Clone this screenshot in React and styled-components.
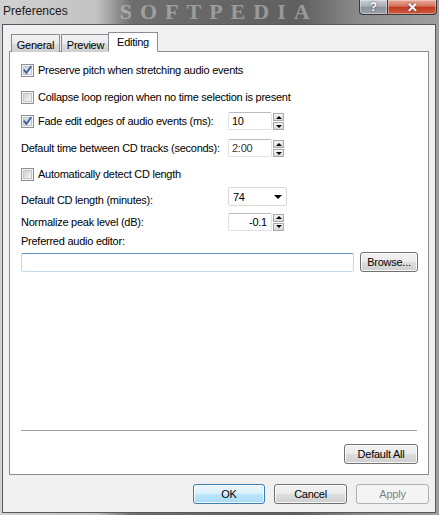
import React from "react";
import styled, { createGlobalStyle } from "styled-components";

const GlobalStyle = createGlobalStyle`
  html, body {
    margin: 0;
    padding: 0;
  }
  body {
    width: 439px;
    height: 515px;
    overflow: hidden;
    background: #c4c8cc;
    font-family: "Liberation Sans", Arial, sans-serif;
    font-size: 11px;
    letter-spacing: -0.25px;
    color: #000;
  }
`;

const Window = styled.div`
  width: 439px;
  height: 515px;
  display: flex;
  flex-direction: column;
  background: linear-gradient(
    90deg,
    #d2d2d2 0%,
    #c2c2c2 22%,
    #6e6e6e 30%,
    #5f5f5f 68%,
    #8c8c8c 82%,
    #9e9e9e 100%
  );
`;

const TitleBar = styled.div`
  height: 24px;
  display: flex;
  align-items: flex-start;
`;

const Title = styled.div`
  margin: 4px 0 0 3px;
  font-size: 12px;
  letter-spacing: 0;
  color: #1c1c1c;
  white-space: nowrap;
`;

const Watermark = styled.div`
  margin: 0 0 0 52px;
  font-family: "Liberation Serif", "Times New Roman", serif;
  font-size: 22px;
  font-weight: bold;
  letter-spacing: 8px;
  color: rgba(235, 235, 235, 0.42);
  white-space: nowrap;
  line-height: 24px;
`;

const Captions = styled.div`
  margin-left: auto;
  margin-right: 2px;
  display: flex;
  height: 15px;
`;

const CaptionButton = styled.div`
  width: ${({ w }) => w}px;
  height: 14px;
  border: 1px solid #3a3a3a;
  border-top: none;
  border-radius: ${({ close }) => (close ? "0 0 4px 0" : "0 0 0 4px")};
  border-left-width: ${({ close }) => (close ? 0 : 1)}px;
  background: ${({ close }) =>
    close
      ? "linear-gradient(#e9a897, #d5735d 45%, #c23a1f 50%, #cf5a3f)"
      : "linear-gradient(#c9ced3, #aab0b6 45%, #8d949b 50%, #9ba2a9)"};
  box-shadow: inset 0 0 0 1px rgba(255, 255, 255, 0.35);
  display: flex;
  align-items: center;
  justify-content: center;
  color: #fff;
  font-weight: bold;
  font-size: ${({ close }) => (close ? 13 : 12)}px;
  letter-spacing: 0;
  text-shadow: 0 0 2px #333;
`;

const Client = styled.div`
  flex: 1;
  margin: 0 3px 2px 2px;
  border: 1px solid #555a60;
  background: #f0f0f0;
  padding: 7px 6px 8px 6px;
  display: flex;
  flex-direction: column;
`;

const TabStrip = styled.div`
  display: flex;
  align-items: flex-end;
  height: 20px;
  padding-left: 2px;
  margin-bottom: -1px;
  position: relative;
  z-index: 1;
`;

const Tab = styled.div`
  width: ${({ w }) => w}px;
  height: ${({ active }) => (active ? 20 : 18)}px;
  box-sizing: border-box;
  border: 1px solid #898c95;
  border-bottom: ${({ active }) => (active ? "1px solid #fff" : "none")};
  margin-left: ${({ active }) => (active ? -2 : 1)}px;
  background: ${({ active }) =>
    active ? "#fff" : "linear-gradient(#f2f2f2, #ebebeb 50%, #dddddd 51%, #cfcfcf)"};
  display: flex;
  align-items: center;
  justify-content: center;
  padding-top: ${({ active }) => (active ? 0 : 2)}px;
  &:first-child {
    margin-left: 0;
  }
`;

const Panel = styled.div`
  flex: 1;
  border: 1px solid #898c95;
  background: #fff;
  padding: 0 10px 10px 11px;
  display: flex;
  flex-direction: column;
`;

const Row = styled.div`
  margin-top: ${({ mt }) => mt}px;
  height: ${({ h }) => h}px;
  display: grid;
  grid-template-columns: ${({ plain }) => (plain ? "auto" : "207px auto")};
  align-items: center;
`;

const CheckLine = styled.label`
  display: flex;
  align-items: center;
  gap: 4px;
  white-space: nowrap;
`;

const Label = styled.span`
  white-space: nowrap;
  align-self: ${({ low }) => (low ? "end" : "center")};
`;

const Spin = styled.div`
  display: flex;
  gap: 1px;
  height: 18px;
`;

const TextBox = styled.div`
  box-sizing: border-box;
  width: ${({ w }) => w}px;
  height: ${({ h }) => h || 18}px;
  border: 1px solid #dfe3e8;
  border-top-color: #b7bcc2;
  border-radius: 2px;
  background: #fff;
  padding: 0 ${({ right }) => (right ? 4 : 3)}px;
  display: flex;
  align-items: center;
  justify-content: ${({ right }) => (right ? "flex-end" : "flex-start")};
  color: ${({ dim }) => (dim ? "#333" : "#000")};
`;

const SpinButtons = styled.div`
  width: 11px;
  display: flex;
  flex-direction: column;
  gap: 1px;
  padding-top: 1px;
`;

const SpinButton = styled.div`
  flex: 1;
  box-sizing: border-box;
  border: 1px solid #a9a9a9;
  background: linear-gradient(#f6f6f6, #d8d8d8);
  display: flex;
  align-items: center;
  justify-content: center;
  &::after {
    content: "";
    border-left: 3px solid transparent;
    border-right: 3px solid transparent;
    ${({ down }) =>
      down ? "border-top: 3px solid #000;" : "border-bottom: 3px solid #000;"}
  }
`;

const Combo = styled.div`
  box-sizing: border-box;
  width: 59px;
  height: 19px;
  border: 1px solid #d9d9d9;
  border-radius: 2px;
  background: #fff;
  padding: 0 4px;
  display: flex;
  align-items: center;
  justify-content: space-between;
  &::after {
    content: "";
    border-left: 4px solid transparent;
    border-right: 4px solid transparent;
    border-top: 4px solid #000;
    margin-top: 1px;
  }
`;

const EditorRow = styled.div`
  margin-top: 4px;
  display: flex;
  align-items: center;
  gap: 6px;
  height: 20px;
`;

const PathBox = styled.div`
  box-sizing: border-box;
  width: 333px;
  height: 19px;
  border: 1px solid #c5d8ea;
  border-top-color: #5b93c0;
  border-radius: 2px;
  background: #fff;
`;

const Button = styled.div`
  box-sizing: border-box;
  width: ${({ w }) => w}px;
  height: 20px;
  border: 1px solid ${({ primary, disabled }) =>
    primary ? "#3c7fb1" : disabled ? "#adb2b5" : "#707070"};
  border-radius: 3px;
  background: ${({ primary, disabled }) =>
    primary
      ? "linear-gradient(#eaf6fd, #d9f0fc 50%, #bee6fd 51%, #a7d9f5)"
      : disabled
      ? "#f4f4f4"
      : "linear-gradient(#f2f2f2, #ebebeb 50%, #dddddd 51%, #cfcfcf)"};
  box-shadow: inset 0 0 0 1px
    ${({ disabled }) => (disabled ? "transparent" : "rgba(255, 255, 255, 0.8)")};
  color: ${({ disabled }) => (disabled ? "#838383" : "#000")};
  display: flex;
  align-items: center;
  justify-content: center;
`;

const Spacer = styled.div`
  flex: 1;
`;

const Separator = styled.div`
  height: 1px;
  background: #a0a0a0;
  margin-right: 1px;
`;

const ButtonRow = styled.div`
  margin-top: ${({ mt }) => mt}px;
  display: flex;
  justify-content: flex-end;
  gap: ${({ gap }) => gap || 0}px;
`;

const CheckBox = ({ checked }) => (
  <svg width="13" height="13" viewBox="0 0 13 13">
    <defs>
      <linearGradient id="cbg" x1="0" y1="0" x2="1" y2="1">
        <stop offset="0" stopColor="#cbcfd5" />
        <stop offset="1" stopColor="#f7f7f7" />
      </linearGradient>
    </defs>
    <rect x="0.5" y="0.5" width="12" height="12" fill="#f4f4f4" stroke="#8e8f8f" />
    <rect x="2.5" y="2.5" width="8" height="8" fill="url(#cbg)" stroke="#c2c6cc" />
    {checked && (
      <path
        d="M3.2 6.2 L5.4 9 L9.8 2.8"
        fill="none"
        stroke="#3d5da8"
        strokeWidth="1.9"
        strokeLinecap="round"
        strokeLinejoin="round"
      />
    )}
  </svg>
);

const SpinBox = ({ value, width, right, dim }) => (
  <Spin>
    <TextBox w={width} right={right} dim={dim}>
      {value}
    </TextBox>
    <SpinButtons>
      <SpinButton />
      <SpinButton down />
    </SpinButtons>
  </Spin>
);

const App = () => (
  <>
    <GlobalStyle />
    <Window>
      <TitleBar>
        <Title>Preferences</Title>
        <Watermark>SOFTPEDIA</Watermark>
        <Captions>
          <CaptionButton w={27}>?</CaptionButton>
          <CaptionButton w={48} close>
            ✕
          </CaptionButton>
        </Captions>
      </TitleBar>
      <Client>
        <TabStrip>
          <Tab w={49}>General</Tab>
          <Tab w={49}>Preview</Tab>
          <Tab w={50} active>
            Editing
          </Tab>
        </TabStrip>
        <Panel>
          <Row plain mt={9} h={18}>
            <CheckLine>
              <CheckBox checked />
              Preserve pitch when stretching audio events
            </CheckLine>
          </Row>
          <Row plain mt={9} h={18}>
            <CheckLine>
              <CheckBox />
              Collapse loop region when no time selection is present
            </CheckLine>
          </Row>
          <Row mt={6} h={18}>
            <CheckLine>
              <CheckBox checked />
              Fade edit edges of audio events (ms):
            </CheckLine>
            <SpinBox value="10" width={44} />
          </Row>
          <Row mt={9} h={18}>
            <Label>Default time between CD tracks (seconds):</Label>
            <SpinBox value="2:00" width={44} dim />
          </Row>
          <Row plain mt={8} h={18}>
            <CheckLine>
              <CheckBox />
              Automatically detect CD length
            </CheckLine>
          </Row>
          <Row mt={4} h={19}>
            <Label low>Default CD length (minutes):</Label>
            <Combo>74</Combo>
          </Row>
          <Row mt={6} h={19}>
            <Label>Normalize peak level (dB):</Label>
            <SpinBox value="-0.1" width={44} right />
          </Row>
          <Row plain mt={3} h={14}>
            <Label>Preferred audio editor:</Label>
          </Row>
          <EditorRow>
            <PathBox />
            <Button w={58}>Browse...</Button>
          </EditorRow>
          <Spacer />
          <Separator />
          <ButtonRow mt={13}>
            <Button w={74}>Default All</Button>
          </ButtonRow>
        </Panel>
        <ButtonRow mt={9} gap={9}>
          <Button w={72} primary>
            OK
          </Button>
          <Button w={73}>Cancel</Button>
          <Button w={73} disabled>
            Apply
          </Button>
        </ButtonRow>
      </Client>
    </Window>
  </>
);

export default App;
